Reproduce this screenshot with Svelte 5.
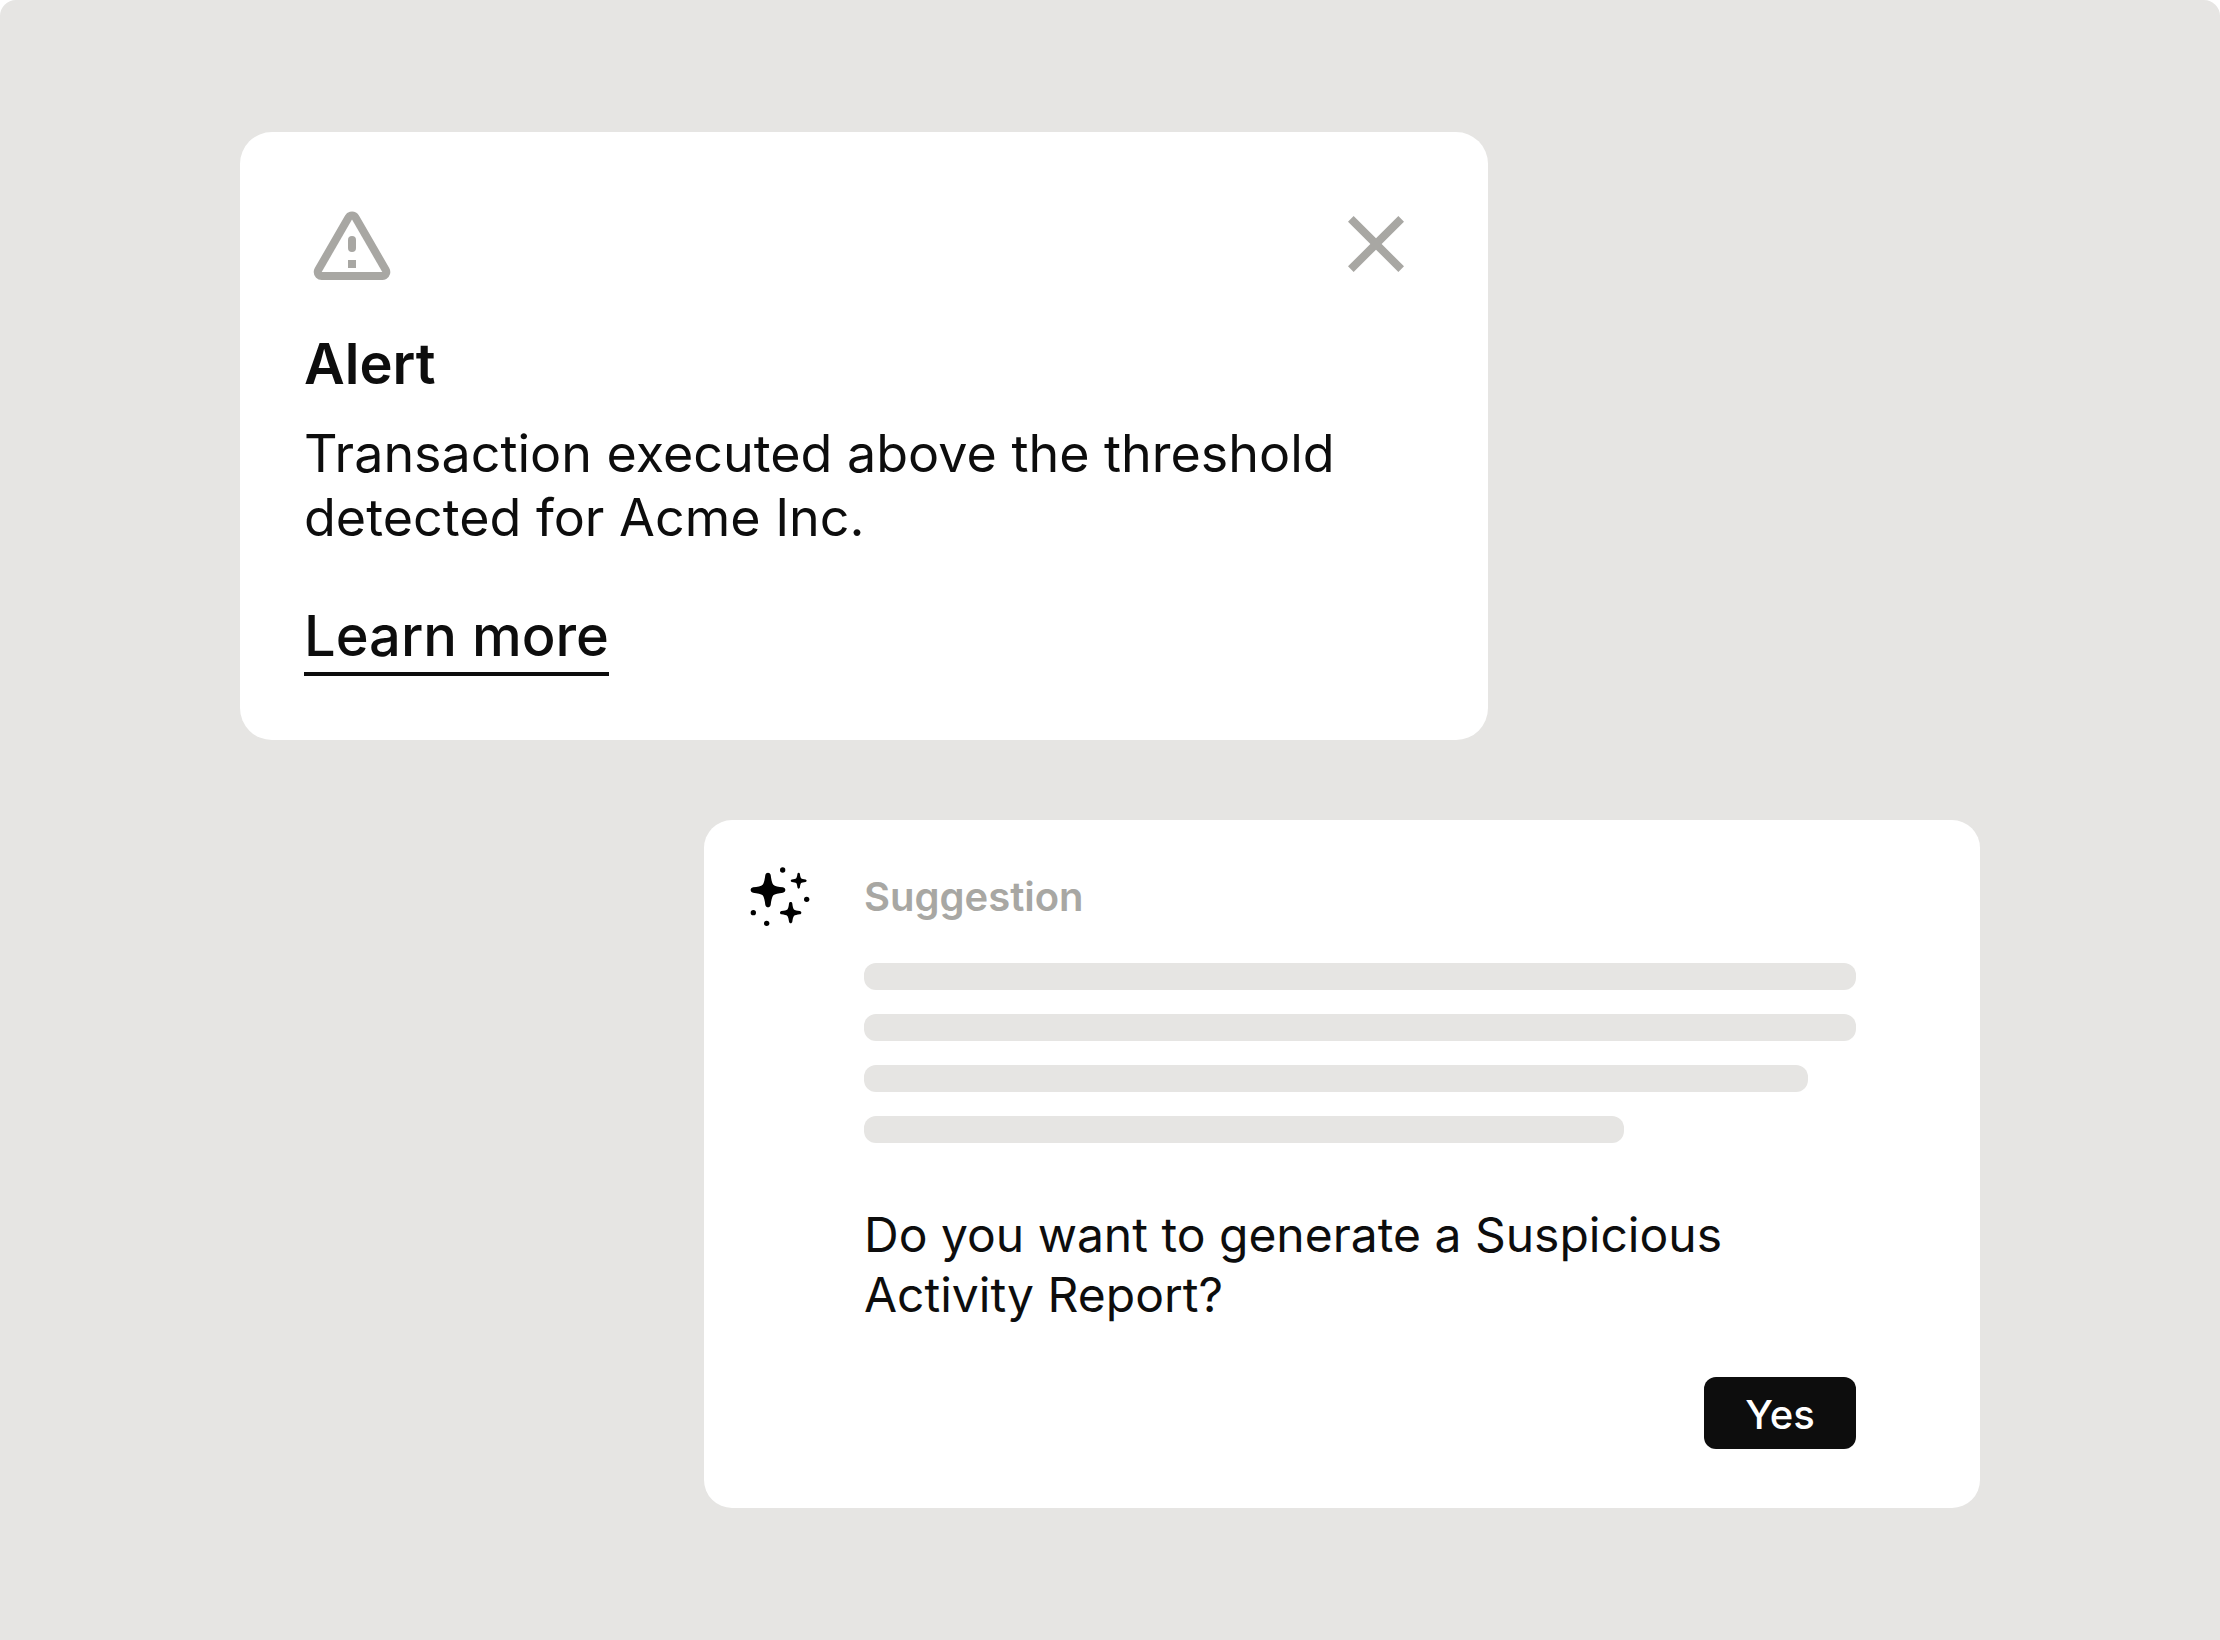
<script>
  const lines = [100, 100, 95.2, 76.6];
  const sparkles = [
    { x: 7.5, y: 9.75, scale: 1 },
    { x: 19, y: 6.25, scale: 0.46 },
    { x: 16, y: 18.25, scale: 0.615 },
  ];
  const dots = [
    [13, 2.25],
    [22, 13.25],
    [2, 18.25],
    [7, 22.25],
  ];
  const star =
    'M-1-5.6C-.85-6.2-.45-6.5 0-6.5S.85-6.2 1-5.6C1.2-4 1.5-2.5 2-2S4-1.2 5.6-1C6.2-.85 6.5-.45 6.5 0S6.2.85 5.6 1C4 1.2 2.5 1.5 2 2S1.2 4 1 5.6C.85 6.2.45 6.5 0 6.5S-.85 6.2-1 5.6C-1.2 4-1.5 2.5-2 2S-4 1.2-5.6 1C-6.2.85-6.5.45-6.5 0S-6.2-.85-5.6-1C-4-1.2-2.5-1.5-2-2S-1.2-4-1-5.6Z';

  let alertOpen = $state(true);
</script>

<main>
  {#if alertOpen}
    <section class="card alert" aria-labelledby="alert-title">
      <header>
        <svg class="icon" viewBox="0 0 96 96" aria-hidden="true">
          <path class="triangle" d="M48 23.5 78.3 76H17.7Z" />
          <rect x="44" y="40" width="8" height="16" rx="4" />
          <rect x="44" y="64" width="8" height="8" />
        </svg>
        <button class="close" aria-label="Close" onclick={() => (alertOpen = false)}>
          <svg class="icon" viewBox="0 0 24 24" aria-hidden="true">
            <path d="M19 6.41 17.59 5 12 10.59 6.41 5 5 6.41 10.59 12 5 17.59 6.41 19 12 13.41 17.59 19 19 17.59 13.41 12Z" />
          </svg>
        </button>
      </header>
      <h2 id="alert-title">Alert</h2>
      <p>Transaction executed above the threshold detected for Acme Inc.</p>
      <a href="#learn-more">Learn more</a>
    </section>
  {/if}

  <section class="card suggestion" aria-labelledby="suggestion-title">
    <svg class="sparkles" viewBox="0 0 24 24" aria-hidden="true">
      {#each sparkles as s}
        <path d={star} transform="translate({s.x} {s.y}) scale({s.scale})" />
      {/each}
      {#each dots as [cx, cy]}
        <circle {cx} {cy} r="1" />
      {/each}
    </svg>
    <div class="content">
      <h2 id="suggestion-title">Suggestion</h2>
      <div class="lines">
        {#each lines as width}
          <div class="line" style="width: {width}%"></div>
        {/each}
      </div>
      <p>Do you want to generate a Suspicious Activity Report?</p>
      <button class="yes">Yes</button>
    </div>
  </section>
</main>

<style>
  :global(body) {
    background: #fff;
  }

  main {
    box-sizing: border-box;
    min-height: 100vh;
    padding: 132px 240px;
    display: flex;
    flex-direction: column;
    gap: 80px;
    border-radius: 16px 16px 0 0;
    background: #e6e5e3;
    color: #0d0d0d;
    font-family: Inter, 'Liberation Sans', sans-serif;
  }

  h2,
  p {
    margin: 0;
  }

  button {
    border: 0;
    font: inherit;
    cursor: pointer;
  }

  svg {
    display: block;
  }

  .card {
    box-sizing: border-box;
    width: 100%;
    background: #fff;
  }

  .alert {
    max-width: 1248px;
    padding: 64px;
    border-radius: 32px;
    display: flex;
    flex-direction: column;
    align-items: flex-start;
  }

  .alert header {
    align-self: stretch;
    display: flex;
    justify-content: space-between;
    margin-bottom: 36px;
  }

  .icon {
    width: 96px;
    height: 96px;
    fill: #a8a7a3;
  }

  .triangle {
    fill: #fff;
    stroke: #a8a7a3;
    stroke-width: 16px;
    stroke-linejoin: round;
    paint-order: stroke;
  }

  .close {
    padding: 0;
    background: none;
  }

  .alert h2 {
    font-size: 56px;
    line-height: 72px;
    font-weight: 600;
  }

  .alert p {
    margin: 22px 0 50px;
    font-size: 52px;
    line-height: 64px;
  }

  .alert a {
    border-bottom: 4px solid #0d0d0d;
    color: inherit;
    font-size: 56px;
    line-height: 72px;
    font-weight: 500;
    text-decoration: none;
  }

  .suggestion {
    max-width: 1276px;
    margin-left: auto;
    padding: 44px 124px 59px 44px;
    border-radius: 28px;
    display: flex;
    gap: 52px;
  }

  .sparkles {
    flex: none;
    width: 64px;
    height: 64px;
    fill: #000;
  }

  .content {
    flex: 1;
    min-width: 0;
    display: flex;
    flex-direction: column;
  }

  .suggestion h2 {
    color: #a8a7a3;
    font-size: 40px;
    line-height: 66px;
    font-weight: 600;
  }

  .lines {
    display: flex;
    flex-direction: column;
    gap: 24px;
    margin-top: 33px;
  }

  .line {
    height: 27px;
    border-radius: 12px;
    background: #e6e5e3;
  }

  .suggestion p {
    margin: 62px 0 52px;
    font-size: 48px;
    line-height: 60px;
  }

  .yes {
    align-self: flex-end;
    min-width: 152px;
    padding: 14px 40px 10px;
    border-radius: 12px;
    background: #0d0d0d;
    color: #fff;
    font-size: 40px;
    font-weight: 500;
    line-height: 48px;
  }
</style>
